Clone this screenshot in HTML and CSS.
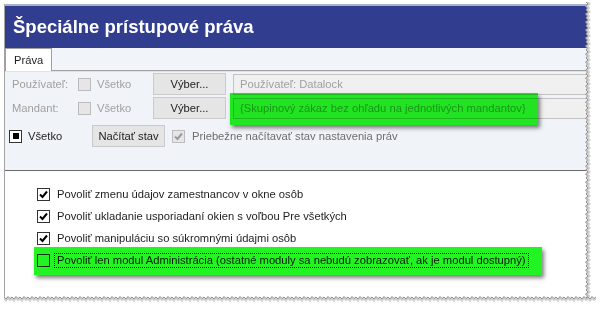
FILE: index.html
```html
<!DOCTYPE html>
<html lang="sk">
<head>
    <meta charset="UTF-8">
    <title>Špeciálne prístupové práva</title>
    <link rel="stylesheet" href="styles.css">
</head>
<body>
    <div class="shot">
        <div class="window">
            <div class="titlebar">
                <h1>Špeciálne prístupové práva</h1>
            </div>
            <div class="tabs">
                <div class="tab">Práva</div>
            </div>
            <div class="pane">
                <div class="filter-row">
                    <span class="label">Používateľ:</span>
                    <span class="check disabled"><span class="box"></span>Všetko</span>
                    <button class="btn">Výber...</button>
                    <div class="field">Používateľ: Datalock</div>
                </div>
                <div class="filter-row second">
                    <span class="label">Mandant:</span>
                    <span class="check disabled"><span class="box"></span>Všetko</span>
                    <button class="btn">Výber...</button>
                    <div class="field">{Skupinový zákaz bez ohľadu na jednotlivých mandantov}</div>
                </div>
                <div class="state-row">
                    <span class="check all"><span class="box mixed"></span>Všetko</span>
                    <button class="btn">Načítať stav</button>
                    <span class="check disabled live">
                        <span class="box"><svg viewBox="0 0 11 11"><path d="M2 5.5 L4.5 8 L9 2.5"/></svg></span>Priebežne načítavať stav nastavenia práv
                    </span>
                </div>
            </div>
            <ul class="rights">
                <li><span class="box"><svg viewBox="0 0 11 11"><path d="M2 5.5 L4.5 8 L9 2.5"/></svg></span><span class="text">Povoliť zmenu údajov zamestnancov v okne osôb</span></li>
                <li><span class="box"><svg viewBox="0 0 11 11"><path d="M2 5.5 L4.5 8 L9 2.5"/></svg></span><span class="text">Povoliť ukladanie usporiadaní okien s voľbou Pre všetkých</span></li>
                <li><span class="box"><svg viewBox="0 0 11 11"><path d="M2 5.5 L4.5 8 L9 2.5"/></svg></span><span class="text">Povoliť manipuláciu so súkromnými údajmi osôb</span></li>
                <li><span class="box"></span><span class="text focus">Povoliť len modul Administrácia (ostatné moduly sa nebudú zobrazovať, ak je modul dostupný)</span></li>
            </ul>
        </div>

        <div class="mark mark-mandant"></div>
        <div class="mark mark-admin"></div>

        <svg class="tear tear-right" width="12" height="304">
            <defs>
                <pattern id="edge-v" width="12" height="8" patternUnits="userSpaceOnUse">
                    <path d="M4 0 L6 2 L3.5 4 L5.5 6 L4 8 L12 8 L12 0 Z" fill="#fff"/>
                    <path d="M5.5 0 L7.5 2 L5 4 L7 6 L5.5 8" stroke="#cfcfcf" stroke-width="2" fill="none"/>
                    <path d="M4 0 L6 2 L3.5 4 L5.5 6 L4 8" stroke="#8e8e8e" fill="none"/>
                </pattern>
            </defs>
            <rect width="12" height="304" fill="url(#edge-v)"/>
        </svg>
        <svg class="tear tear-bottom" width="592" height="14">
            <defs>
                <pattern id="edge-h" width="8" height="14" patternUnits="userSpaceOnUse">
                    <path d="M0 5 L2 7 L4 4.5 L6 6.5 L8 5 L8 14 L0 14 Z" fill="#fff"/>
                    <path d="M0 6.5 L2 8.5 L4 6 L6 8 L8 6.5" stroke="#cfcfcf" stroke-width="2" fill="none"/>
                    <path d="M0 5 L2 7 L4 4.5 L6 6.5 L8 5" stroke="#8e8e8e" fill="none"/>
                </pattern>
            </defs>
            <rect width="592" height="14" fill="url(#edge-h)"/>
        </svg>
    </div>
</body>
</html>
```

FILE: styles.css
```css
body {
    margin: 0;
    background: #fff;
    font-family: "Liberation Sans", Arial, sans-serif;
    font-size: 11.2px;
    color: #1e1e1e;
}
.shot {
    position: relative;
    width: 601px;
    height: 313px;
    overflow: hidden;
}
.window {
    margin: 4px 0 0 4px;
    width: 583px;
    height: 294px;
    box-sizing: border-box;
    border-top: 2px solid #a7b2c4;
    border-left: 1px solid #a3a3a3;
    background: #fff;
    overflow: hidden;
}
.titlebar {
    height: 42px;
    background: #313d8f;
    padding-left: 8px;
    display: flex;
    align-items: center;
}
h1 {
    margin: 0;
    color: #fff;
    font-size: 18.5px;
    font-weight: bold;
}
.tabs {
    height: 22px;
    background: #f1f4f9;
    border-bottom: 1px solid #a0a0a0;
    display: flex;
}
.tab {
    height: 23px;
    margin-bottom: -1px;
    padding: 0 8px;
    box-sizing: border-box;
    border: 1px solid #a0a0a0;
    border-bottom: none;
    background: #fff;
    line-height: 22px;
}
.pane {
    height: 97px;
    padding: 1px 0 0 7px;
    box-sizing: content-box;
    background: #f0f4f9;
    border-top: 1px solid #dde3ec;
    border-bottom: 1px solid #6b6b6b;
}
.filter-row,
.state-row {
    display: flex;
    align-items: center;
    height: 22px;
}
.filter-row.second {
    margin-top: 2px;
}
.state-row {
    margin-top: 6px;
}
.label {
    width: 66px;
    color: #a0a0a0;
}
.check {
    display: flex;
    align-items: center;
    width: 75px;
}
.check.disabled {
    color: #a0a0a0;
}
.check.all {
    width: 83px;
    margin-left: -3px;
    color: #1e1e1e;
}
.check.live {
    width: auto;
    margin-left: 7px;
    color: #6d6d6d;
}
.check .box {
    margin-right: 6px;
}
.check.live .box {
    margin-right: 7px;
}
.box {
    width: 13px;
    height: 13px;
    box-sizing: border-box;
    border: 1px solid #333;
    background: #fff;
    display: flex;
    align-items: center;
    justify-content: center;
    flex-shrink: 0;
}
.box svg {
    width: 11px;
    height: 11px;
}
.box path {
    fill: none;
    stroke: #000;
    stroke-width: 2;
}
.disabled .box {
    border-color: #bcbcbc;
    background: #e6e6e6;
}
.disabled .box path {
    stroke: #9a9a9a;
}
.box.mixed::after {
    content: "";
    width: 6px;
    height: 6px;
    background: #000;
}
.btn {
    width: 73px;
    height: 22px;
    padding: 0;
    border: 1px solid #cacaca;
    background: #e5e5e5;
    font-family: inherit;
    font-size: 11.2px;
    color: #222;
}
.field {
    flex: 1;
    height: 21px;
    margin: 0 -10px 0 7px;
    padding-left: 6px;
    box-sizing: border-box;
    border: 1px solid #c3c3c3;
    background: #f0f0f0;
    color: #a0a0a0;
    line-height: 19px;
    white-space: nowrap;
}
.rights {
    list-style: none;
    margin: 0;
    padding: 12px 0 0 32px;
}
.rights li {
    display: flex;
    align-items: center;
    height: 22px;
}
.rights .box {
    margin-right: 4px;
}
.text {
    padding: 0 2px;
    border: 1px solid transparent;
    line-height: 13px;
}
.text.focus {
    border: 1px dotted #000;
}
.mark {
    position: absolute;
    background: #23f223;
    mix-blend-mode: multiply;
    box-shadow: 2px 3px 4px rgba(0, 0, 0, 0.5);
}
.mark-mandant {
    left: 230px;
    top: 93px;
    width: 308px;
    height: 32px;
}
.mark-admin {
    left: 34px;
    top: 247px;
    width: 508px;
    height: 28px;
}
.tear {
    position: absolute;
}
.tear-right {
    left: 582px;
    top: 2px;
}
.tear-bottom {
    left: 4px;
    top: 292px;
}
```
